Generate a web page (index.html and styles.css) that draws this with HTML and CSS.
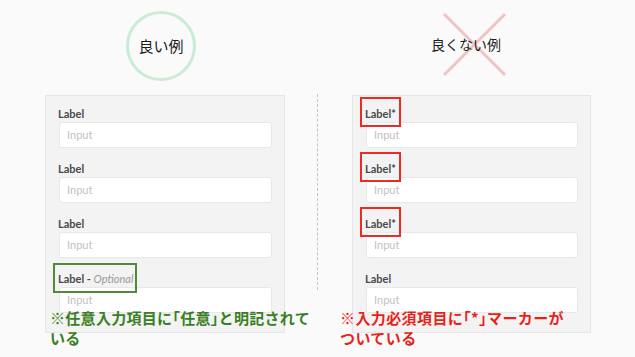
FILE: index.html
```html
<!DOCTYPE html>
<html lang="ja">
<head>
<meta charset="utf-8">
<title>Label examples</title>
<link rel="stylesheet" href="styles.css">
</head>
<body>
<main class="page">
  <section class="col col-good">
    <header class="head">
      <div class="circle">良い例</div>
    </header>
    <div class="panel">
      <div class="field"><div class="label">Label</div><div class="input">Input</div></div>
      <div class="field"><div class="label">Label</div><div class="input">Input</div></div>
      <div class="field"><div class="label">Label</div><div class="input">Input</div></div>
      <div class="field"><div class="label">Label - <em class="optional">Optional</em></div><div class="input">Input</div><span class="mark mark-good"></span></div>
    </div>
    <p class="note note-good">※任意入力項目に「任意」と明記されて<br>いる</p>
  </section>
  <div class="divider"></div>
  <section class="col col-bad">
    <header class="head head-bad">
      <svg class="cross" width="65" height="65" viewBox="0 0 65 65"><path d="M2 2 L63 63 M63 2 L2 63" stroke="#f0c4c4" stroke-width="3" fill="none"/></svg>
      <span class="head-title">良くない例</span>
    </header>
    <div class="panel">
      <div class="field"><div class="label">Label*</div><div class="input">Input</div><span class="mark mark-bad"></span></div>
      <div class="field"><div class="label">Label*</div><div class="input">Input</div><span class="mark mark-bad"></span></div>
      <div class="field"><div class="label">Label*</div><div class="input">Input</div><span class="mark mark-bad"></span></div>
      <div class="field"><div class="label">Label</div><div class="input">Input</div></div>
    </div>
    <p class="note note-bad">※入力必須項目に「*」マーカーが<br>ついている</p>
  </section>
</main>
</body>
</html>
```
FILE: styles.css
```css
* { box-sizing: border-box; }
html, body { margin: 0; padding: 0; }
body {
  width: 635px;
  height: 357px;
  overflow: hidden;
  background: #fafafa;
  font-family: "Noto Sans CJK JP", "Noto Sans", sans-serif;
}
.page {
  display: flex;
  align-items: flex-start;
  padding-left: 45px;
}
.col { position: relative; }
.col-good { width: 240px; }
.col-bad { width: 239px; margin-left: 34px; }
.divider {
  width: 0;
  height: 196px;
  margin-top: 94px;
  margin-left: 32px;
  border-left: 1px dashed #c4c4c4;
}
.head {
  height: 95px;
  display: flow-root;
}
.circle {
  margin-left: 81px;
  margin-top: 11px;
  width: 70px;
  height: 70px;
  border: 3px solid #c9ebd8;
  border-radius: 50%;
  display: flex;
  align-items: center;
  justify-content: center;
  font-size: 15px;
  color: #1a1a1a;
  line-height: 20px;
}
.head-bad { position: relative; }
.cross {
  display: block;
  margin-left: 90px;
  margin-top: 12px;
}
.head-title {
  position: absolute;
  left: 79px;
  top: 34px;
  font-size: 14px;
  line-height: 20px;
  color: #1a1a1a;
  white-space: nowrap;
}
.panel {
  background: #f3f3f3;
  border: 1px solid #e6e6e6;
  padding: 12px 12px 19px 12px;
}
.field { position: relative; }
.field + .field { margin-top: 15px; }
.label {
  font-family: Lato, "Noto Sans", sans-serif;
  font-weight: 700;
  font-size: 11px;
  line-height: 12px;
  color: #4a4a4a;
  margin-bottom: 2px;
}
.optional {
  font-weight: 400;
  font-style: italic;
  color: #9a9a9a;
}
.input {
  margin-left: 1px;
  height: 26px;
  background: #fff;
  border: 1px solid #e8e8e8;
  border-radius: 3px;
  padding-left: 7px;
  font-family: Lato, "Noto Sans", sans-serif;
  font-size: 11px;
  line-height: 24px;
  color: #c2c2c2;
}
.mark {
  position: absolute;
  height: 30px;
  border: 2px solid;
}
.mark-good {
  left: -5px;
  top: -10px;
  width: 84px;
  border-color: #4f8a3c;
}
.mark-bad {
  left: -5px;
  top: -11px;
  width: 41px;
  border-color: #ec2b24;
}
.note {
  position: absolute;
  margin: 0;
  top: 308px;
  font-size: 15px;
  font-weight: 700;
  line-height: 20px;
  white-space: nowrap;
  font-feature-settings: "halt";
}
.note-good {
  left: 5px;
  color: #3b7f23;
  letter-spacing: 0.3px;
}
.note-bad {
  left: -12px;
  color: #ea1f1a;
  letter-spacing: 0.4px;
}
```
